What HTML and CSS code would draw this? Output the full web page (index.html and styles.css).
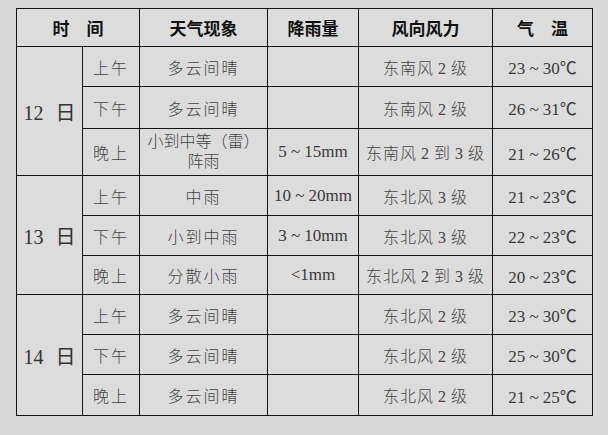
FILE: index.html
```html
<!DOCTYPE html>
<html lang="zh">
<head>
<meta charset="utf-8">
<link rel="stylesheet" href="styles.css">
</head>
<body>
<table class="forecast">
  <colgroup>
    <col class="c-date"><col class="c-part"><col class="c-wx"><col class="c-rain"><col class="c-wind"><col class="c-temp">
  </colgroup>
  <thead>
    <tr class="r-head">
      <th colspan="2">时　间</th>
      <th>天气现象</th>
      <th>降雨量</th>
      <th>风向风力</th>
      <th>气　温</th>
    </tr>
  </thead>
  <tbody>
    <tr class="r40">
      <td rowspan="3" class="day">12 日</td>
      <td class="part">上午</td>
      <td class="wx">多云间晴</td>
      <td class="num"></td>
      <td class="wind">东南风 2 级</td>
      <td class="num">23 ~ 30℃</td>
    </tr>
    <tr class="r42">
      <td class="part">下午</td>
      <td class="wx">多云间晴</td>
      <td class="num"></td>
      <td class="wind">东南风 2 级</td>
      <td class="num">26 ~ 31℃</td>
    </tr>
    <tr class="r47">
      <td class="part">晚上</td>
      <td class="wx wrap">小到中等（雷）<br>阵雨</td>
      <td class="num">5 ~ 15mm</td>
      <td class="wind">东南风 2 到 3 级</td>
      <td class="num">21 ~ 26℃</td>
    </tr>
    <tr class="r40">
      <td rowspan="3" class="day">13 日</td>
      <td class="part">上午</td>
      <td class="wx">中雨</td>
      <td class="num">10 ~ 20mm</td>
      <td class="wind">东北风 3 级</td>
      <td class="num">21 ~ 23℃</td>
    </tr>
    <tr class="r40">
      <td class="part">下午</td>
      <td class="wx">小到中雨</td>
      <td class="num">3 ~ 10mm</td>
      <td class="wind">东北风 3 级</td>
      <td class="num">22 ~ 23℃</td>
    </tr>
    <tr class="r39">
      <td class="part">晚上</td>
      <td class="wx">分散小雨</td>
      <td class="num">&lt;1mm</td>
      <td class="wind">东北风 2 到 3 级</td>
      <td class="num">20 ~ 23℃</td>
    </tr>
    <tr class="r40">
      <td rowspan="3" class="day">14 日</td>
      <td class="part">上午</td>
      <td class="wx">多云间晴</td>
      <td class="num"></td>
      <td class="wind">东北风 2 级</td>
      <td class="num">23 ~ 30℃</td>
    </tr>
    <tr class="r40">
      <td class="part">下午</td>
      <td class="wx">多云间晴</td>
      <td class="num"></td>
      <td class="wind">东北风 2 级</td>
      <td class="num">25 ~ 30℃</td>
    </tr>
    <tr class="r41">
      <td class="part">晚上</td>
      <td class="wx">多云间晴</td>
      <td class="num"></td>
      <td class="wind">东北风 2 级</td>
      <td class="num">21 ~ 25℃</td>
    </tr>
  </tbody>
</table>
</body>
</html>
```

FILE: styles.css
```css
html, body {
  margin: 0;
  padding: 0;
  background: #dadada;
}
body {
  padding: 8px 0 0 16px;
  font-family: "Liberation Serif", "Noto Sans CJK SC", serif;
  color: #3c3c3c;
}
.forecast {
  border-collapse: collapse;
  table-layout: fixed;
  width: 576px;
  background: #dcdcdc;
}
.c-date { width: 66px; }
.c-part { width: 57px; }
.c-wx { width: 128px; }
.c-rain { width: 91px; }
.c-wind { width: 134px; }
.c-temp { width: 100px; }

.forecast th,
.forecast td {
  border: 1.5px solid #151515;
  padding: 0;
  text-align: center;
  vertical-align: middle;
  white-space: nowrap;
}
.forecast th {
  font-family: "Noto Sans CJK SC", sans-serif;
  font-weight: 700;
  font-size: 17px;
  color: #111;
}
.r-head { height: 38px; }
.r39 { height: 39px; }
.r40 { height: 40px; }
.r41 { height: 41px; }
.r42 { height: 42px; }
.r47 { height: 47px; }

.day {
  font-size: 20px;
  word-spacing: 7px;
  color: #333;
}
.part,
.wx,
.wind {
  font-family: "Liberation Serif", "Noto Sans CJK SC", serif;
  font-size: 16px;
  letter-spacing: 2px;
  font-weight: 300;
  color: #444;
}
.wind {
  letter-spacing: 1px;
  word-spacing: -1px;
}
.wrap {
  white-space: normal;
  letter-spacing: 0;
  line-height: 20px;
}
.num {
  font-size: 17px;
  color: #3a3a3a;
}
```
